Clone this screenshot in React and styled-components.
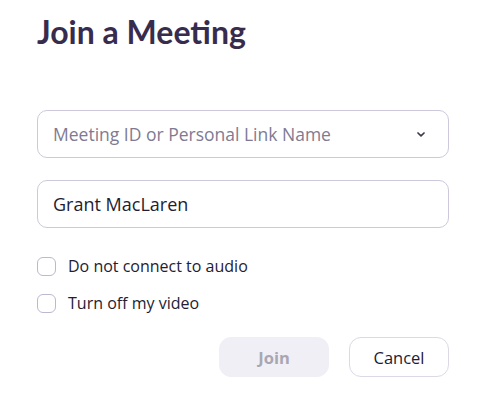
import React from 'react'
import styled, { createGlobalStyle } from 'styled-components'

const GlobalStyle = createGlobalStyle`
  html, body {
    margin: 0;
    padding: 0;
    background: #ffffff;
  }
  body {
    font-family: "Open Sans", Lato, sans-serif;
  }
`

export default function App() {
  return (
    <>
      <GlobalStyle />
      <Dialog>
        <Title>Join a Meeting</Title>
        <Fields>
          <Field>
            <FieldText $placeholder>Meeting ID or Personal Link Name</FieldText>
            <Chevron viewBox="0 0 8 5">
              <path d="M1 1 L4 3.8 L7 1" />
            </Chevron>
          </Field>
          <Field>
            <FieldText>Grant MacLaren</FieldText>
          </Field>
        </Fields>
        <Options>
          <Option>
            <Box />
            <span>Do not connect to audio</span>
          </Option>
          <Option>
            <Box />
            <span>Turn off my video</span>
          </Option>
        </Options>
        <Actions>
          <Button $disabled>Join</Button>
          <Button>Cancel</Button>
        </Actions>
      </Dialog>
    </>
  )
}

const Dialog = styled.div`
  width: 496px;
  height: 405px;
  box-sizing: border-box;
  padding: 12px 47px 0 37px;
  display: flex;
  flex-direction: column;
`

const Title = styled.h1`
  margin: 0;
  font-family: Lato, "Open Sans", sans-serif;
  font-size: 32px;
  font-weight: 700;
  color: #382c4e;
  line-height: 40px;
`

const Fields = styled.div`
  margin-top: 58px;
  display: flex;
  flex-direction: column;
  gap: 22px;
`

const Field = styled.div`
  height: 48px;
  box-sizing: border-box;
  border: 1px solid #cdc8dc;
  border-radius: 10px;
  display: flex;
  align-items: center;
  justify-content: space-between;
  padding: 0 23px 0 15px;
`

const FieldText = styled.span`
  font-size: ${p => (p.$placeholder ? '17.5px' : '18px')};
  color: ${p => (p.$placeholder ? '#7f7a92' : '#231c33')};
`

const Chevron = styled.svg`
  width: 8px;
  height: 5px;
  fill: none;
  stroke: #3f3a4c;
  stroke-width: 1.7;
  stroke-linecap: round;
  stroke-linejoin: round;
`

const Options = styled.div`
  margin-top: 28px;
  display: flex;
  flex-direction: column;
  gap: 17px;
`

const Option = styled.label`
  display: flex;
  align-items: center;
  gap: 12px;
  height: 20px;
  font-size: 16px;
  color: #231c33;
`

const Box = styled.span`
  width: 19px;
  height: 19px;
  box-sizing: border-box;
  border: 1px solid #bdb7d0;
  border-radius: 6px;
  background: #fff;
`

const Actions = styled.div`
  margin-top: 24px;
  display: flex;
  justify-content: flex-end;
  gap: 20px;
`

const Button = styled.div`
  height: 40px;
  box-sizing: border-box;
  border-radius: 12px;
  display: flex;
  align-items: center;
  justify-content: center;
  font-size: 16.5px;
  width: ${p => (p.$disabled ? '110px' : '100px')};
  background: ${p => (p.$disabled ? '#f0eff5' : '#ffffff')};
  border: 1px solid ${p => (p.$disabled ? '#f0eff5' : '#dcd8e6')};
  color: ${p => (p.$disabled ? '#a9a6b3' : '#231c33')};
  font-weight: ${p => (p.$disabled ? 700 : 400)};
`
